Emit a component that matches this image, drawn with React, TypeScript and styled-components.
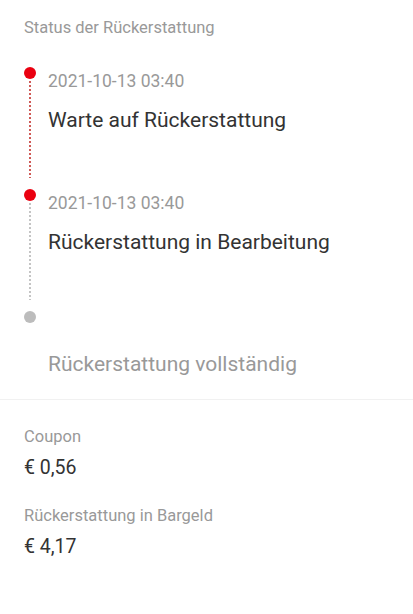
import React from "react";
import styled, { createGlobalStyle } from "styled-components";

const GlobalStyle = createGlobalStyle`
  html, body {
    margin: 0;
    padding: 0;
    background: #ffffff;
  }
  body {
    font-family: Roboto, "Noto Sans", "Liberation Sans", sans-serif;
    -webkit-font-smoothing: antialiased;
  }
`;

const Page = styled.div`
  width: 100%;
  min-height: 614px;
  background: #ffffff;
`;

const StatusSection = styled.section`
  padding: 17px 24px 0 24px;
`;

const SectionTitle = styled.h2`
  margin: 0 0 28px 0;
  font-size: 16.5px;
  line-height: 22px;
  font-weight: 400;
  color: #999999;
`;

const Timeline = styled.ul`
  list-style: none;
  margin: 0;
  padding: 0;
`;

const Step = styled.li`
  display: flex;
  flex-direction: row;
`;

const Rail = styled.div`
  width: 12px;
  flex-shrink: 0;
  display: flex;
  flex-direction: column;
  align-items: center;
`;

const Dot = styled.span<{ $active: boolean }>`
  width: 12px;
  height: 12px;
  border-radius: 50%;
  background: ${(p) => (p.$active ? "#ea0010" : "#bcbcbc")};
`;

const Line = styled.span<{ $active: boolean }>`
  width: 2px;
  height: 97px;
  margin-top: 2px;
  background: repeating-linear-gradient(
    to bottom,
    ${(p) => (p.$active ? "#cf5a57" : "#c4c4c4")} 0 2px,
    transparent 2px 4px
  );
`;

const StepBody = styled.div<{ $last: boolean }>`
  flex: 1;
  padding: 2px 0 ${(p) => (p.$last ? "21px" : "55px")} 12px;
`;

const StepTime = styled.div`
  height: 24px;
  font-size: 17.5px;
  line-height: 24px;
  color: #999999;
`;

const StepLabel = styled.div<{ $done: boolean }>`
  margin-top: 13px;
  font-size: 21px;
  line-height: 28px;
  color: ${(p) => (p.$done ? "#333333" : "#999999")};
`;

const Divider = styled.hr`
  margin: 0;
  border: none;
  height: 1px;
  background: #f1f1f1;
`;

const AmountSection = styled.section`
  padding: 26px 24px 0 24px;
  display: flex;
  flex-direction: column;
  gap: 24px;
`;

const AmountRow = styled.div`
  display: flex;
  flex-direction: column;
  gap: 7px;
`;

const AmountLabel = styled.div`
  font-size: 16.5px;
  line-height: 22px;
  color: #999999;
`;

const AmountValue = styled.div`
  font-size: 19.5px;
  line-height: 26px;
  color: #333333;
`;

interface StepData {
  time: string;
  label: string;
  done: boolean;
}

const steps: StepData[] = [
  { time: "2021-10-13 03:40", label: "Warte auf Rückerstattung", done: true },
  { time: "2021-10-13 03:40", label: "Rückerstattung in Bearbeitung", done: true },
  { time: "", label: "Rückerstattung vollständig", done: false },
];

const amounts = [
  { label: "Coupon", value: "€ 0,56" },
  { label: "Rückerstattung in Bargeld", value: "€ 4,17" },
];

const App: React.FC = () => {
  return (
    <Page>
      <GlobalStyle />
      <StatusSection>
        <SectionTitle>Status der Rückerstattung</SectionTitle>
        <Timeline>
          {steps.map((step, i) => {
            const last = i === steps.length - 1;
            // line colour follows the step after it
            const nextDone = !last && steps[i + 1].done;
            return (
              <Step key={step.label}>
                <Rail>
                  <Dot $active={step.done} />
                  {!last && <Line $active={nextDone} />}
                </Rail>
                <StepBody $last={last}>
                  <StepTime>{step.time}</StepTime>
                  <StepLabel $done={step.done}>{step.label}</StepLabel>
                </StepBody>
              </Step>
            );
          })}
        </Timeline>
      </StatusSection>
      <Divider />
      <AmountSection>
        {amounts.map((a) => (
          <AmountRow key={a.label}>
            <AmountLabel>{a.label}</AmountLabel>
            <AmountValue>{a.value}</AmountValue>
          </AmountRow>
        ))}
      </AmountSection>
    </Page>
  );
};

export default App;
